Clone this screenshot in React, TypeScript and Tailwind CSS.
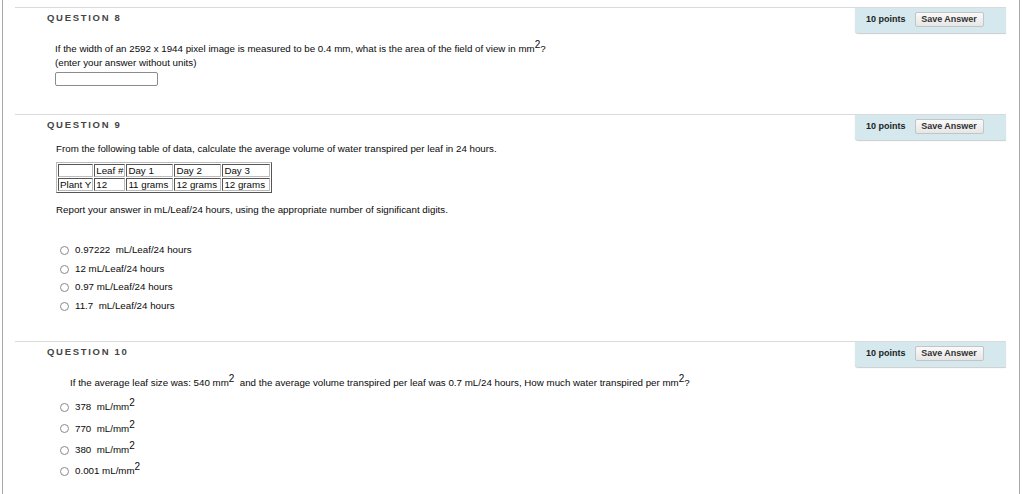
import React from 'react';

const font = { fontFamily: '"Liberation Sans", Arial, sans-serif' };

function Sup({ children }: { children: React.ReactNode }) {
  return <span className="relative -top-[4px] text-[10px] leading-none">{children}</span>;
}

function Radio() {
  return <span className="inline-block w-[9px] h-[9px] rounded-full border border-[#8a8a8a] bg-white shrink-0" />;
}

function QuestionHeader({ title }: { title: string }) {
  return (
    <div className="flex items-start justify-between border-t border-[#dadada]">
      <div className="pl-[32px] pt-[3px] text-[9.5px] font-bold tracking-[1.7px] text-[#444]">{title}</div>
      <div className="flex items-center h-[25px] w-[151px] pl-[11px] pb-[2px] bg-[#d4e8ee] rounded-bl-[3px] shadow-[0_1px_1px_rgba(0,0,0,0.2)]">
        <span className="text-[9px] font-bold text-[#222]">10 points</span>
        <button className="ml-[9px] h-[15px] w-[69px] rounded-[2px] border border-[#c4c4c4] bg-gradient-to-b from-[#fafafa] to-[#e6e6e6] text-[9px] font-bold text-[#333] whitespace-nowrap">
          Save Answer
        </button>
      </div>
    </div>
  );
}

function Option({ children, h }: { children: React.ReactNode; h: string }) {
  return (
    <div className={`flex items-center gap-[6px] ${h}`}>
      <Radio />
      <span className="whitespace-pre">{children}</span>
    </div>
  );
}

const cell = 'border border-t-[#555] border-l-[#555] border-r-[#bbb] border-b-[#bbb] px-[1px] whitespace-nowrap text-left';

export default function App() {
  const q9Options = ['0.97222  mL/Leaf/24 hours', '12 mL/Leaf/24 hours', '0.97 mL/Leaf/24 hours', '11.7  mL/Leaf/24 hours'];
  const q10Options = ['378  mL/mm', '770  mL/mm', '380  mL/mm', '0.001 mL/mm'];

  return (
    <div style={font} className="w-[1024px] h-[494px] bg-white overflow-hidden">
      <div className="ml-[2px] w-[1018px] h-[494px] border-l border-r border-[#a8a8a8] pt-[7px] pl-[12px] pr-[13px] text-[9.75px] text-[#0a0a0a]">
        {/* Question 8 */}
        <div className="h-[107px]">
          <QuestionHeader title="QUESTION 8" />
          <div className="pl-[40px] pt-[9px] leading-[14px]">
            <p>
              If the width of an 2592 x 1944 pixel image is measured to be 0.4 mm, what is the area of the field of view in mm<Sup>2</Sup>?
            </p>
            <p>(enter your answer without units)</p>
            <input className="mt-[2px] w-[103px] h-[14px] rounded-[2px] border border-[#8c8c8c] bg-white" />
          </div>
        </div>

        {/* Question 9 */}
        <div className="h-[227px]">
          <QuestionHeader title="QUESTION 9" />
          <div className="pl-[41px] pt-[2px]">
            <p className="leading-[14px]">From the following table of data, calculate the average volume of water transpired per leaf in 24 hours.</p>
            <table className="mt-[6px] border-separate border-spacing-[1px] border border-t-[#bbb] border-l-[#bbb] border-r-[#555] border-b-[#555] text-[9.75px] leading-[11px]">
              <tbody>
                <tr>
                  <td className={`w-[34px] ${cell}`}></td>
                  <td className={`w-[30px] ${cell}`}>Leaf #</td>
                  <td className={`w-[47px] ${cell}`}>Day 1</td>
                  <td className={`w-[47px] ${cell}`}>Day 2</td>
                  <td className={`w-[48px] ${cell}`}>Day 3</td>
                </tr>
                <tr>
                  <td className={cell}>Plant Y</td>
                  <td className={cell}>12</td>
                  <td className={cell}>11 grams</td>
                  <td className={cell}>12 grams</td>
                  <td className={cell}>12 grams</td>
                </tr>
              </tbody>
            </table>
            <p className="mt-[10px] leading-[14px]">Report your answer in mL/Leaf/24 hours, using the appropriate number of significant digits.</p>
            <div className="mt-[24px] ml-[4px]">
              {q9Options.map((o) => (
                <Option key={o} h="h-[18.7px]">{o}</Option>
              ))}
            </div>
          </div>
        </div>

        {/* Question 10 */}
        <div>
          <QuestionHeader title="QUESTION 10" />
          <div className="pl-[45px] pt-[2px]">
            <p className="pl-[10px] leading-[28px] whitespace-pre">
              If the average leaf size was: 540 mm<Sup>2</Sup>  and the average volume transpired per leaf was 0.7 mL/24 hours, How much water transpired per mm<Sup>2</Sup>?
            </p>
            <div>
              {q10Options.map((o) => (
                <Option key={o} h="h-[21.3px]">
                  {o}
                  <Sup>2</Sup>
                </Option>
              ))}
            </div>
          </div>
        </div>
      </div>
    </div>
  );
}
